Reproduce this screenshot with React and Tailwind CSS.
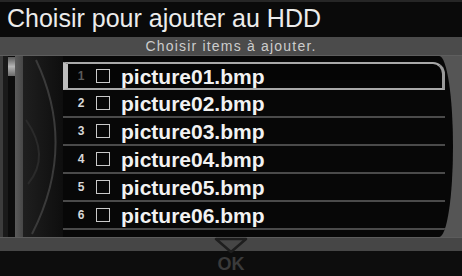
import React from "react";

const rows = [1, 2, 3, 4, 5, 6];

function Row({ n }) {
  const sel = n === 1;
  return (
    <div
      className={
        sel
          ? "relative flex h-[28px] items-center border-y-2 border-l-[5px] border-r-[3px] border-y-[#a9a9a9] border-l-[#bdbdbd] border-r-[#9a9a9a] rounded-tr-[12px] pl-[9px] bg-[#050505]"
          : "flex h-[28px] items-center border-b-2 border-[#4a4a4a] pl-[14px]"
      }
    >
      <span
        className={
          "w-[8px] text-center text-[12px] font-bold leading-none " +
          (sel ? "text-[#5a5a5a]" : "text-[#d8d8d8]")
        }
      >
        {n}
      </span>
      <span className="ml-[11px] h-[14px] w-[14px] border-[1.5px] border-[#c9c9c9]" />
      <span className="ml-[11px] text-[21px] font-bold leading-none text-[#f2f2f2]">
        {`picture0${n}.bmp`}
      </span>
    </div>
  );
}

export default function App() {
  return (
    <div
      className="relative h-[276px] w-[462px] overflow-hidden bg-[#0d0d0d]"
      style={{ fontFamily: '"Liberation Sans", Arial, sans-serif' }}
    >
      {/* Title */}
      <div className="h-[37px] border-t-2 border-[#262626] bg-[#0a0a0a] pl-[7px] pt-[4px] text-[25px] leading-[25px] text-[#ececec]">
        Choisir pour ajouter au HDD
      </div>
      {/* Subtitle */}
      <div className="h-[18px] bg-[#4b4b4b] text-center text-[14px] leading-[18px] tracking-[1.2px] text-[#cdcdcd]">
        Choisir items à ajouter.
      </div>
      {/* Main */}
      <div className="flex h-[182px] border-t border-[#5e5e5e] bg-[#555555]">
        <div className="w-[3px] bg-[#3c3c3c]" />
        <div className="w-[5px] bg-[#1a1a1a]" />
        <div className="flex w-[7px] flex-col bg-[#0c0c0c]">
          <div className="mt-[1px] h-[19px] bg-gradient-to-b from-[#5a5a5a] via-[#b5b5b5] to-[#6a6a6a]" />
        </div>
        <div className="w-[8px] bg-gradient-to-r from-[#5a5a5a] to-[#474747]" />
        <div className="flex w-[430px] overflow-hidden rounded-r-[14px_92px] bg-[#070707]">
          <div className="w-[40px] bg-gradient-to-r from-[#1f1f1f] to-[#0e0e0e]">
            <svg width="40" height="181" viewBox="0 0 40 181">
              <path d="M13 4 Q 54 90 9 178" fill="none" stroke="#3a3a3a" strokeWidth="2" />
              <path d="M3 64 Q 28 100 5 128" fill="none" stroke="#2a2a2a" strokeWidth="2" />
            </svg>
          </div>
          <div className="flex w-[382px] flex-col pt-[6px]">
            {rows.map((n) => (
              <Row key={n} n={n} />
            ))}
          </div>
        </div>
      </div>
      {/* Bottom band */}
      <div className="h-[14px] border-t border-[#5c5c5c] bg-[#464646]" />
      <div className="pt-[4px] text-center text-[18px] font-bold leading-[18px] text-[#3a3a3a]">
        OK
      </div>
      {/* triangle overlay */}
      <svg
        className="absolute left-[214px] top-[237px]"
        width="34"
        height="16"
        viewBox="0 0 34 16"
      >
        <path d="M2 2 L32 2 L17 15 Z" fill="none" stroke="#1e1e1e" strokeWidth="2.5" strokeLinejoin="round" />
      </svg>
    </div>
  );
}
